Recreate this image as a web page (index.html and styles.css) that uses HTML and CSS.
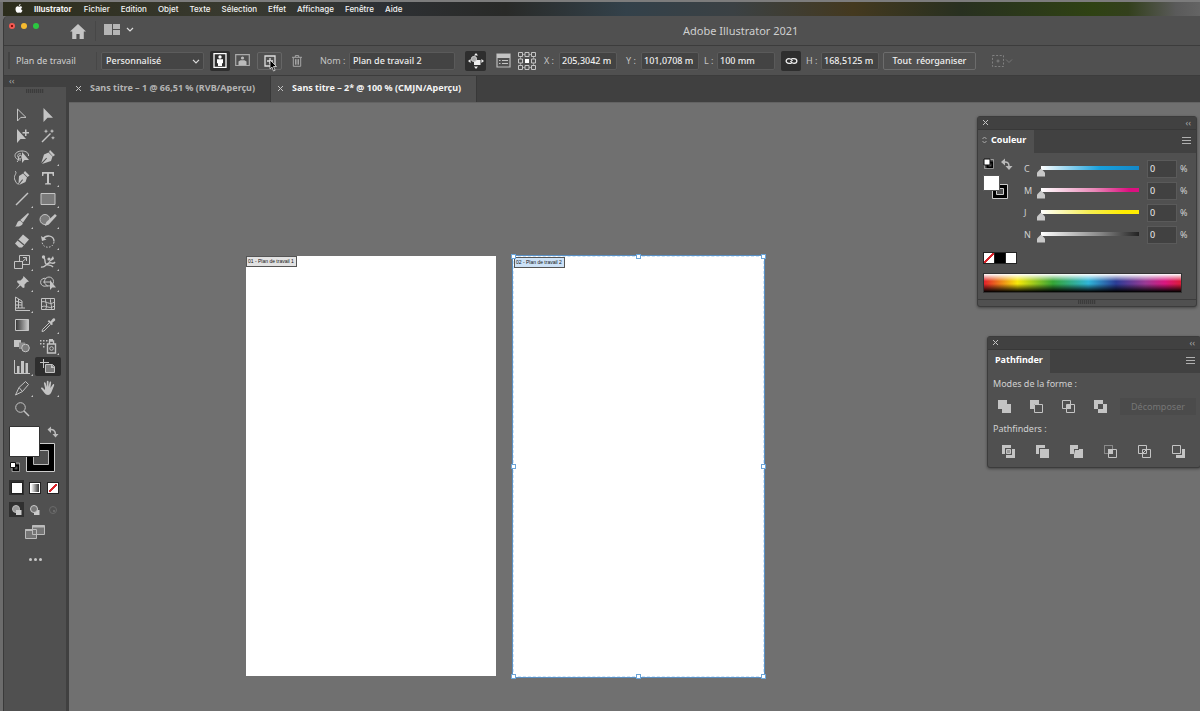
FILE: index.html
```html
<!DOCTYPE html>
<html lang="fr">
<head>
<meta charset="utf-8">
<title>Adobe Illustrator 2021</title>
<link rel="stylesheet" href="styles.css">
</head>
<body>
<nav class="menubar">
  <svg class="apple" viewBox="0 0 16 18"><path d="M11 4.600c1.500 0 2.700.8 3.400 1.900-2.900 1.700-2.400 5.600.6 6.700-.8 2.200-2.200 4.300-3.700 4.300-1.200 0-1.600-.7-3-.7s-1.900.7-3 .7C3.400 17.500 1 13.600 1 10.300 1 6.800 3.200 4.700 5.400 4.700c1.300 0 2.200.8 3 .8S10 4.600 11 4.600zM11 0c.2 2-1.400 4-3.200 4C7.500 2.200 9.200.2 11 0z"/></svg>
  <a class="app" href="#">Illustrator</a><a href="#">Fichier</a><a href="#">Edition</a><a href="#">Objet</a><a href="#">Texte</a><a href="#">Sélection</a><a href="#">Effet</a><a href="#">Affichage</a><a href="#">Fenêtre</a><a href="#">Aide</a>
</nav>
<div class="window">
  <header class="titlebar">
    <div class="lights"><i class="red"></i><i class="amber"></i><i class="green"></i></div>
    <button class="home" aria-label="Accueil"><svg width="16" height="15" viewBox="0 0 16 15"><path fill="#c4c4c4" d="M8 0 0 7.500h2.200V15h4.200v-5h3.200v5h4.200V7.500H16z"/></svg></button>
    <button class="workspace" aria-label="Espace de travail"><svg width="31" height="11" viewBox="0 0 31 11"><path fill="#b5b5b5" d="M0 0h8v11H0zM9 0h7v5H9zM9 6h7v5H9z"/><path d="m23 4 3 3 3-3" fill="none" stroke="#ddd" stroke-width="1.200"/></svg></button>
    <h1>Adobe Illustrator 2021</h1>
  </header>

  <div class="controls">
    <span class="grip"></span>
    <span class="name">Plan de travail</span>
    <span class="preset"><select aria-label="Format prédéfini"><option>Personnalisé</option></select><svg width="8" height="5" viewBox="0 0 8 5"><path d="m1 .8 3 3 3-3" fill="none" stroke="#ddd" stroke-width="1.200"/></svg></span>
    <button class="sq dark" aria-label="Portrait"><svg width="14" height="15" viewBox="0 0 14 15"><path d="M1 .7h12v13.600H1z" fill="none" stroke="#fff" stroke-width="1.300"/><circle cx="7" cy="4" r="1.700" fill="#fff"/><path fill="#fff" d="M4 6.300h6v4H9V13H5v-2.700H4z"/></svg></button>
    <button class="sq wide" aria-label="Paysage"><svg width="15" height="13" viewBox="0 0 15 13"><path d="M.7.700h13.600v10.800H.7z" fill="none" stroke="#aaa" stroke-width="1.200"/><circle cx="7.500" cy="4" r="1.600" fill="#bbb"/><path fill="#bbb" d="M3.500 11V7.500l2-1.200h4l2 1.200V11z"/></svg></button>
    <button class="sq new" aria-label="Nouveau plan de travail"><svg width="12" height="12" viewBox="0 0 12 12"><path d="M1 1h10v10H1zM6 3v6M3 6h6" fill="none" stroke="#ddd" stroke-width="1.300"/></svg><svg class="cursor" width="9" height="13" viewBox="0 0 9 13"><path d="M1 1v9l2-2 1.500 4 1.600-.7L4.500 7.500h3z" fill="#000" stroke="#ddd" stroke-width=".8"/></svg></button>
    <button class="sq trash" aria-label="Supprimer"><svg width="10" height="12" viewBox="0 0 10 12"><path d="M0 2.300h10M3.300 2V.6h3.400V2M1.300 2.500v8.800h7.400V2.500M3.500 4.200v5.500M5 4.200v5.500M6.500 4.200v5.500" fill="none" stroke="#a5a5a5"/></svg></button>
    <label class="l-nom" for="nom">Nom :</label><input id="nom" class="f-nom" value="Plan de travail 2">
    <button class="sq dark move" aria-label="Déplacer avec le plan de travail"><svg width="16" height="16" viewBox="0 0 16 16"><path fill="#eee" d="m8 0 2 2.600H6zM8 16l2-2.600H6zM0 8l2.600-2v4zM16 8l-2.600-2v4zM7 7h5.500v5H6V9z"/><circle cx="6" cy="6" r="2.700" fill="#aaa" stroke="#ddd" stroke-width=".7"/></svg></button>
    <button class="sq list" aria-label="Options"><svg width="15" height="15" viewBox="0 0 15 15"><path d="M1 1h13v13H1z" fill="none" stroke="#bbb" stroke-width="1.200"/><path fill="#c4c4c4" d="M1 1h13v4H1z"/><path d="M3 7.500h1.500M6 7.500h6M3 10.500h1.500M6 10.500h6" stroke="#c4c4c4"/></svg></button>
    <button class="sq ref" aria-label="Point de référence"><svg width="18" height="18" viewBox="0 0 18 18"><path d="M2.500 2.500h13v13h-13z" fill="none" stroke="#aaa" stroke-width=".8"/><g fill="#505050" stroke="#c4c4c4"><path d="M.5.500h4v4h-4zM7 .5h4v4H7zM13.500.500h4v4h-4zM.5 7h4v4h-4zM13.500 7h4v4h-4zM.5 13.500h4v4h-4zM7 13.500h4v4H7zM13.500 13.500h4v4h-4z"/></g><path d="M7 7h4v4H7z" fill="#fff"/></svg></button>
    <label class="l-x" for="px">X :</label><input id="px" class="f-num" value="205,3042 mm">
    <label class="l-y" for="py">Y :</label><input id="py" class="f-num" value="101,0708 mm">
    <label class="l-l" for="pl">L :</label><input id="pl" class="f-num" value="100 mm">
    <button class="sq dark link" aria-label="Conserver les proportions"><svg width="13" height="8" viewBox="0 0 13 8"><path d="M6.500 6.300H4C.2 6.300.2 1.700 4 1.700c2 0 2.700.7 3.500 2.300M6.500 1.700H9c3.800 0 3.800 4.600 0 4.600-2 0-2.700-.7-3.500-2.300" fill="none" stroke="#eee" stroke-width="1.300"/></svg></button>
    <label class="l-h" for="ph">H :</label><input id="ph" class="f-num" value="168,5125 mm">
    <button class="arrange">Tout &nbsp;réorganiser</button>
    <button class="sq snap" aria-label="Aligner" disabled><svg width="22" height="14" viewBox="0 0 22 14"><path d="M1.500 1.500h11v11h-11z" fill="none" stroke="#808080" stroke-dasharray="2 1.600"/><path d="M7 5.500v3M5.500 7h3" stroke="#808080"/><path d="m15 5.500 3 3 3-3" fill="none" stroke="#767676"/></svg></button>
  </div>

  <div class="work">
    <aside class="tools">
      <div class="strip">‹‹</div>
      <div class="hatch"></div>
      <div class="grid">
        <button aria-label="Sélection directe"><svg viewBox="0 0 16 16"><path d="M3.500 2v12l3.300-3.600H12z" class="o"/></svg></button>
        <button aria-label="Sélection"><svg viewBox="0 0 16 16"><path d="M3.500 1v14l4-4.300H13z"/></svg></button>
        <button aria-label="Sélection progressive"><svg viewBox="0 0 16 16"><path d="M3 1v14l3.500-4H12zM11 1.500h1.500V4H15v1.500h-2.500V8H11V5.500H8.500V4H11z"/></svg></button>
        <button aria-label="Baguette magique"><svg viewBox="0 0 16 16"><path d="m2 14 8.500-8.500" class="o m"/><path d="m6 1 .7 1.700L8.500 3l-1.800.8L6 5.500l-.7-1.700L3.500 3l1.800-.3zM12 1l.7 1.500 1.500.5-1.500.7L12 5.200l-.7-1.500L9.800 3l1.500-.5zM13 8l.6 1.300 1.400.4-1.400.7-.6 1.300-.6-1.300-1.400-.7 1.400-.4z"/></svg></button>
        <button aria-label="Lasso"><svg viewBox="0 0 16 16"><path d="M7 11c-4 0-6-2-6-4.500C1 4 4 2 8 2s7 2 6.500 5M7 5C4.500 4 3 6 4 8s4 2 4 0-2-2-3-1 0 5-2 6" class="o"/><path d="M8 3v11l2.600-3H15z"/></svg></button>
        <button class="more" aria-label="Plume"><svg viewBox="0 0 16 16"><path d="m10 1 5 5-2 1.500L9 3zM8.500 3.500l4 4L11 12l-9 3 5-5.500-.7-.7L1.300 14 4 5.500z"/></svg></button>
        <button aria-label="Courbure"><svg viewBox="0 0 16 16"><path d="m11 1 4.500 4.500-2 1.500-4-4zM9 3.500l4 4-1.500 4.500L5 15l4-5-.7-.7L4.500 14 5 6z"/><path d="M1 1c3 2-2 5-.5 8S2 14 5 14" class="o"/></svg></button>
        <button class="more" aria-label="Texte"><svg viewBox="0 0 16 16"><path d="M2 2h12v4h-1.200l-.5-2.300H9V13l2 .4V14.500H5v-1.100l2-.4V3.700H3.700L3.200 6H2z"/></svg></button>
        <button class="more" aria-label="Segment"><svg viewBox="0 0 16 16"><path d="M2 14 14 2" class="o m"/></svg></button>
        <button class="more" aria-label="Rectangle"><svg viewBox="0 0 16 16"><path d="M1 2.500h14v11H1z" class="o g"/></svg></button>
        <button class="more" aria-label="Pinceau"><svg viewBox="0 0 16 16"><path d="m14 1 1 1-6 8.500L6.300 8zM6 8.500l2.800 2.500C8.500 14 4 15 1 14.500c2-.5 1.500-5.500 5-6z"/></svg></button>
        <button class="more" aria-label="Shaper"><svg class="big" viewBox="0 0 18 16"><circle cx="6" cy="7.500" r="5" class="o g"/><path d="m16 2 1.800 1.800-8 8.700-4 1.500L7.300 10z"/></svg></button>
        <button class="more" aria-label="Gomme"><svg viewBox="0 0 16 16"><path d="m9 1.500 6 5-7 8H5l-4-4z"/><path d="m4 7 6 5" stroke="#505050" stroke-width="1.200"/></svg></button>
        <button class="more" aria-label="Rotation"><svg viewBox="0 0 16 16"><path d="M3 6C6 1.500 14 2 14 8.500" class="o m"/><path d="M14 9c-1 7-11 7-12 0" class="o" stroke-dasharray="1.500 1.500"/><path d="m1 3 1 5 4.500-1.500z"/></svg></button>
        <button class="more" aria-label="Mise à l'échelle"><svg viewBox="0 0 16 16"><path d="M.5 7.500h8v7h-8zM5.500 7.500v-6h10v9h-7M8 8l4.500-4M9 3.500h3.500V7" class="o"/></svg></button>
        <button class="more" aria-label="Largeur"><svg viewBox="0 0 16 16"><path d="M1 13c4 1 5-3 8-4s4 2 6-1M4 4c2 2 0 4 2 6s5 0 7 3" class="o m"/><circle cx="3.500" cy="3" r="1.700"/><circle cx="9" cy="5" r="1.600"/><path d="m8 9 5-7 1 3z"/></svg></button>
        <button class="more" aria-label="Punaise"><svg viewBox="0 0 16 16"><path d="m9.500 1 5.500 5.500-2 .5-2.500 2.500v3l-1.500.5L6.500 10.500 1.500 14.500l4-5L3 7l.5-1.500h3L9 3z"/></svg></button>
        <button class="more" aria-label="Concepteur de forme"><svg viewBox="0 0 16 16"><circle cx="9" cy="6.500" r="4.500" class="o"/><path d="M6 3.500a4 4 0 1 0 0 7.500h2M3 7h7" class="o"/><path d="M10 5v10l2.300-2.500H16z"/></svg></button>
        <button class="more" aria-label="Grille de perspective"><svg viewBox="0 0 16 16"><path d="M1.500 1v13.500H16M1.500 1 8 5v7M1.500 5l6.500 2M1.500 9H8M4.500 3v9M1.500 12H11" class="o"/></svg></button>
        <button aria-label="Filet"><svg viewBox="0 0 16 16"><path d="M1.500 2.500h13v11h-13zM1.500 6c4-2 8 4 13 0M1.500 11c5-3 7 3 13-1M6 2c-2 4 3 7-1 12M11 2c-2 4 2 8 0 12" class="o"/></svg></button>
        <button aria-label="Dégradé"><svg viewBox="0 0 16 16"><defs><linearGradient id="gr"><stop stop-color="#333"/><stop offset="1" stop-color="#ccc"/></linearGradient></defs><path d="M1.500 2.500h13v11h-13z" fill="url(#gr)" stroke="#c4c4c4"/></svg></button>
        <button class="more" aria-label="Pipette"><svg viewBox="0 0 16 16"><path d="M10.500 4.500 12.500 2c1.500-2 4 .5 2 2L12 6l1 1-1.300 1.300-4-4L9 3z"/><path d="m9 6-6.500 6.500-.5 2 2-.5L10.500 7.500" class="o"/></svg></button>
        <button aria-label="Dégradé de formes"><svg viewBox="0 0 16 16"><path d="M0 2h7v7H0z"/><path d="M5 4.500h6V11H5z" fill="#8c8c8c"/><circle cx="11.500" cy="10" r="3.800" class="o g"/></svg></button>
        <button class="more" aria-label="Pulvérisation"><svg class="big" viewBox="0 0 18 16"><path d="M8.500 6h8v9h-8zM10.500 5.500V3h4v2.500" class="o m"/><circle cx="12.500" cy="10.500" r="1.800" class="o"/><path d="M1 2h1.500v1.500H1zM4 2h1.500v1.500H4zM7 2h1.500v1.500H7zM1 5h1.500v1.500H1zM4 5h1.500v1.500H4zM4 8h1.500v1.500H4zM10 1h4v2h-4z"/></svg></button>
        <button class="more" aria-label="Graphe"><svg viewBox="0 0 16 16"><path d="M.5 1v13.500H16" class="o"/><path d="M3 7h2.500v7H3zM7 2h3v12H7zM11.500 4h2.500v10h-2.500z"/></svg></button>
        <button class="on" aria-label="Plan de travail"><svg viewBox="0 0 16 16"><path d="M3.500 0v9M0 3.500h9" class="o"/><path d="M5.500 5.500h7l2 2v6h-9z" class="o g"/><path d="M11 5.500v3.500h3.500z"/></svg></button>
        <button class="more" aria-label="Tranche"><svg viewBox="0 0 16 16"><path d="M11.500 1.500 14.500 4.500 8.500 11.500 1.500 15 5 7.500zM5 7.500l3.500 4" class="o"/></svg></button>
        <button class="more" aria-label="Main"><svg viewBox="0 0 16 16"><path d="M5 8 4 3.500c-.3-1.500 1.200-1.800 1.600-.5L6.800 7V1.800c0-1.400 1.700-1.400 1.700 0V7l1-4.600c.3-1.300 1.900-1 1.600.4L10.400 8l2.200-3.300c.8-1.200 2-.4 1.500.8l-2.600 6.600C10.700 14 9.500 15 8 15c-1.600 0-2.500-.8-3.500-2L1.200 8.800c-.7-1.100.5-1.900 1.500-1L5 10z"/></svg></button>
        <button aria-label="Zoom"><svg viewBox="0 0 16 16"><circle cx="6.500" cy="6.500" r="4.800" class="o"/><path d="m10 10 5 5" class="o m"/></svg></button>
      </div>
      <svg class="fillstroke" width="50" height="47" viewBox="0 0 50 47"><path d="M17.500 17.500h28v28h-28z" fill="#000" stroke="#ccc"/><path d="M24.500 24.500h15v14h-15z" fill="#505050" stroke="#bbb"/><path d="M.5.500h30v30H.5z" fill="#fff" stroke="#333"/><path d="M41 3.500c3-.5 5.500 1 5.500 5" fill="none" stroke="#bbb" stroke-width="1.500"/><path fill="#bbb" d="m38.500 3.500 3.500-3v6.500zM46.500 11.500 43.500 8h6z"/><path d="M4.500 39.500h5v5h-5z" fill="none" stroke="#000" stroke-width="2"/><path d="M1.500 36.500h5v5h-5z" fill="#fff" stroke="#111"/><path d="M7 37h3.500v8.500H3V42" fill="none" stroke="#bbb" stroke-width=".7"/></svg>
      <div class="modes">
        <button class="on" aria-label="Couleur"><i class="white"></i></button><button aria-label="Dégradé"><i class="ramp"></i></button><button aria-label="Sans"><i class="none"></i></button>
      </div>
      <div class="modes draw">
        <button class="on" aria-label="Dessin normal"><svg viewBox="0 0 12 12"><circle cx="5" cy="5" r="3.500" fill="#999" stroke="#bbb"/><path fill="#ccc" d="M5 6h5.500v5H5z"/></svg></button><button aria-label="Dessin arrière"><svg viewBox="0 0 12 12"><path fill="#ccc" d="M5 6h5.500v5H5z"/><circle cx="5" cy="5" r="3.500" fill="#777" stroke="#ccc"/></svg></button><button aria-label="Dessin intérieur"><svg viewBox="0 0 12 12"><circle cx="6" cy="6" r="3.500" fill="none" stroke="#6a6a6a"/><path fill="#6a6a6a" d="M6 6h2v2H6z"/></svg></button>
      </div>
      <button class="screen" aria-label="Mode d'écran"><svg width="20" height="14" viewBox="0 0 20 14"><path d="M.5 4.500h11v9H.5zM7.500.500h12v9h-12z" fill="#757575" stroke="#bbb"/><path d="M.5 5h7M7.500 1.500h12" stroke="#bbb" stroke-width="2"/></svg></button>
      <button class="dots" aria-label="Modifier la barre d'outils"><i></i><i></i><i></i></button>
    </aside>

    <main class="docs">
      <div class="tabs">
        <div class="tab"><button class="x" aria-label="Fermer"><svg viewBox="0 0 7 7"><path d="m1 1 5 5M6 1 1 6"/></svg></button><span>Sans titre – 1 @ 66,51 % (RVB/Aperçu)</span></div>
        <div class="tab on"><button class="x" aria-label="Fermer"><svg viewBox="0 0 7 7"><path d="m1 1 5 5M6 1 1 6"/></svg></button><span>Sans titre – 2* @ 100 % (CMJN/Aperçu)</span></div>
      </div>
      <div class="canvas">
        <section class="board one"><span class="tag">01 - Plan de travail 1</span></section>
        <section class="board two"><span class="tag">02 - Plan de travail 2</span>
          <i class="h nw"></i><i class="h n"></i><i class="h ne"></i><i class="h w"></i><i class="h e"></i><i class="h sw"></i><i class="h s"></i><i class="h se"></i>
        </section>

        <section class="panel color">
          <div class="phead"><button class="x" aria-label="Fermer"><svg viewBox="0 0 7 7"><path d="m1 1 5 5M6 1 1 6"/></svg></button><span>‹‹</span></div>
          <div class="ptabs"><h2><svg width="5" height="8" viewBox="0 0 5 8"><path d="m.5 3 2-2 2 2M.5 5l2 2 2-2" fill="none" stroke="#aaa"/></svg>Couleur</h2><button class="burger" aria-label="Menu"><i></i><i></i><i></i></button></div>
          <div class="cbody">
            <div class="mix">
              <svg width="32" height="44" viewBox="0 0 32 44"><path d="M4.500 4.500h5v5h-5z" fill="none" stroke="#000" stroke-width="2"/><path d="M1 1h6v6H1z" fill="#fff" stroke="#111"/><path d="M7.500 1.500h3v9h-9v-3" fill="none" stroke="#bbb" stroke-width=".7"/><path d="M21 4c3-.5 5 1 5 4" fill="none" stroke="#bbb" stroke-width="1.500"/><path fill="#bbb" d="m18 4 4-3.500v7zM26 12l-3.500-4h7z"/><path d="M9.500 26.500h15v14h-15z" fill="#000" stroke="#ccc"/><path d="M13.500 30.500h7v6h-7z" fill="#505050" stroke="#ccc"/><path d="M.5 17.500h16v15H.5z" fill="#fff" stroke="#555"/></svg>
              <div class="sliders">
                <label for="c">C</label><input type="range" class="cy" id="c" value="0"><input class="val" value="0" aria-label="C %"><span>%</span>
                <label for="m">M</label><input type="range" class="ma" id="m" value="0"><input class="val" value="0" aria-label="M %"><span>%</span>
                <label for="j">J</label><input type="range" class="ye" id="j" value="0"><input class="val" value="0" aria-label="J %"><span>%</span>
                <label for="n">N</label><input type="range" class="bk" id="n" value="0"><input class="val" value="0" aria-label="N %"><span>%</span>
              </div>
            </div>
            <div class="chips"><i class="none"></i><i class="black"></i><i class="white"></i></div>
            <div class="spectrum"></div>
          </div>
          <div class="pfoot"><div class="hatch"></div></div>
        </section>

        <section class="panel path">
          <div class="phead"><button class="x" aria-label="Fermer"><svg viewBox="0 0 7 7"><path d="m1 1 5 5M6 1 1 6"/></svg></button><span>‹‹</span></div>
          <div class="ptabs"><h2>Pathfinder</h2><button class="burger" aria-label="Menu"><i></i><i></i><i></i></button></div>
          <div class="pbody">
            <p>Modes de la forme :</p>
            <div class="row shape">
              <button aria-label="Réunion"><svg viewBox="0 0 13 13"><path d="M0 0h9v4h4v9H4V9H0z"/></svg></button>
              <button aria-label="Soustraction"><svg viewBox="0 0 13 13"><path d="M0 0h9v4H4v5H0z"/><path d="M4.500 4.500h8v8h-8z" class="o"/></svg></button>
              <button aria-label="Intersection"><svg viewBox="0 0 13 13"><path d="M.5.500h8v8h-8zM4.500 4.500h8v8h-8z" class="o"/><path d="M5 5h4v4H5z"/></svg></button>
              <button aria-label="Exclusion"><svg viewBox="0 0 13 13"><path fill-rule="evenodd" d="M0 0h9v4h4v9H4V9H0zM4 4v5h5V4z"/></svg></button>
              <button class="expand" disabled>Décomposer</button>
            </div>
            <p>Pathfinders :</p>
            <div class="row finders">
              <button aria-label="Division"><svg viewBox="0 0 13 13"><path d="M0 0h9v3H3v6H0zM10 4h3v9H4v-3h6z"/><path d="M4.500 4.500h4v4h-4z" fill="#999" stroke="#c4c4c4"/></svg></button>
              <button aria-label="Fond"><svg viewBox="0 0 13 13"><path d="M0 0h9v3H3v6H0zM4 4h9v9H4z"/></svg></button>
              <button aria-label="Fusion"><svg viewBox="0 0 13 13"><path d="M0 0h8v4H4v5H0zM9 0v4h4v9H4V9.500L5 5h4z"/></svg></button>
              <button aria-label="Rogner"><svg viewBox="0 0 13 13"><path d="M.5.500h8v8h-8z" class="o" stroke-dasharray="1 1"/><path d="M9 4.500h3.500v8h-8V9" class="o"/><path d="M4 4h5v5H4z"/></svg></button>
              <button aria-label="Contour"><svg viewBox="0 0 13 13"><path d="M.5.500h8v8h-8zM4.500 4.500h8v8h-8z" class="o"/><path d="m5 8 3-3" class="o"/></svg></button>
              <button aria-label="Arrière moins avant"><svg viewBox="0 0 13 13"><path d="M.5.500h8v8h-8z" class="o"/><path d="M10 4h3v9H4v-3h6z"/></svg></button>
            </div>
          </div>
        </section>
      </div>
    </main>
  </div>
</div>
</body>
</html>
```
FILE: styles.css
```css
* { box-sizing: border-box; }
body {
  margin: 0;
  height: 100vh;
  display: flex;
  flex-direction: column;
  overflow: hidden;
  background: #6c6c6c;
  color: #d0d0d0;
  font: 9px/12px "Noto Sans", "Open Sans", sans-serif;
  border-top: 2px solid #7c7c7c;
  padding-left: 3px;
}
button, input, select { font: inherit; color: inherit; margin: 0; padding: 0; border: 0; background: none; }
button { display: flex; align-items: center; justify-content: center; flex: none; }
h1, h2, p { margin: 0; font: inherit; }
svg { flex: none; display: block; }

.menubar {
  flex: none;
  height: 14px;
  display: flex;
  align-items: center;
  gap: 11px;
  padding: 0 0 1px 12px;
  background: linear-gradient(90deg, #2c2d1c, #393a30 20%, #2e3135 31%, #292a28 42%, #33414a 52%, #3b4144 61%, #44391f 71%, #283020 80%, #2f4213 91%, #33401c 94%, #5a5a5a 98%, #646464);
  font: 500 8px/12px Inter, sans-serif;
}
.menubar a { color: #f2f2f2; text-decoration: none; }
.menubar .app { font-weight: 700; margin-right: 1px; }
.apple { width: 8px; height: 9px; fill: #fff; }

.window { flex: 1; min-height: 0; display: flex; flex-direction: column; border-left: 1px solid #3a3a3a; border-radius: 5px 0 0 0; background: #505050; }
.titlebar { flex: none; height: 30px; display: flex; align-items: center; border-bottom: 1px solid #3c3c3c; }
.lights { display: flex; gap: 6px; padding: 0 0 10px 5px; }
.lights i { width: 6px; height: 6px; border-radius: 50%; }
.red { background: radial-gradient(#8a0f0c 22%, #f25a52 32%); }
.amber { background: #f6bb2f; }
.green { background: #2bc840; }
.home { margin-left: 31px; padding-top: 1px; height: 18px; }
.workspace { margin-left: 9px; padding: 0 0 3px 8px; height: 20px; border-left: 1px solid #474747; }
h1 { margin-left: 548px; font-size: 11px; line-height: 16px; color: #cfcfcf; }

.controls { flex: none; height: 30px; display: flex; align-items: center; border-bottom: 1px solid #3c3c3c; }
.grip { width: 2px; height: 17px; margin-left: 4px; background: #434343; }
.name { width: 81px; margin-left: 6px; border-right: 1px solid #474747; line-height: 18px; }
.preset { width: 103px; height: 18px; margin-left: 4px; position: relative; }
.preset select { width: 100%; height: 18px; appearance: none; background: #454545; border: 1px solid #5c5c5c; border-radius: 2px; color: #eee; font-weight: 500; padding-left: 4px; }
.preset svg { position: absolute; right: 4px; top: 7px; pointer-events: none; }
.sq { height: 20px; width: 20px; }
.preset + .sq { margin-left: 6px; }
.dark { background: #2e2e2e; border-radius: 2px; }
.wide { margin-left: 2px; width: 21px; }
.new { position: relative; margin-left: 4px; width: 25px; border: 1px solid #666; border-radius: 2px; height: 18px; }
.cursor { position: absolute; left: 11px; top: 6px; }
.trash { margin-left: 5px; }
.controls label { color: #c4c4c4; white-space: nowrap; flex: none; }
.l-nom { width: 29px; margin-left: 13px; }
.l-x { width: 15px; margin-left: 7px; }
.l-y { width: 15px; margin-left: 9px; }
.l-l { width: 13px; margin-left: 5px; }
.l-h { width: 15px; margin-left: 5px; }
.controls input { height: 18px; background: #434343; border: 1px solid #5a5a5a; border-radius: 2px; color: #eee; font-weight: 500; padding: 0 5px 0 2px; }
.controls .f-nom { width: 106px; padding-left: 3px; }
.controls .f-num { width: 58px; }
.move { margin-left: 10px; width: 21px; }
.list { margin-left: 7px; }
.ref { margin-left: 4px; }
.link { margin-left: 6px; }
.arrange { margin-left: 4px; width: 93px; height: 18px; border: 1px solid #6c6c6c; border-radius: 2px; color: #f0f0f0; font-weight: 500; white-space: nowrap; }
.snap { margin-left: 15px; width: 22px; }

.work { flex: 1; min-height: 0; display: flex; background: #404040; }
.tools { width: 62px; flex: none; background: #505050; display: flex; flex-direction: column; align-items: flex-start; }
.strip { width: 100%; height: 11px; background: #404040; padding-left: 5px; color: #aaa; line-height: 9px; }
.hatch { width: 18px; height: 4px; background: repeating-linear-gradient(90deg, #3c3c3c 0 1px, #4a4a4a 1px 2px); }
.tools .hatch { margin: 2px 0 11px 22px; }
.grid { display: grid; grid-template-columns: 26px 26px; grid-auto-rows: 21px; margin-left: 5px; }
.grid button { position: relative; border-radius: 2px; }
.grid svg { width: 16px; height: 16px; }
.grid .big { width: 18px; }
.grid svg, .row svg { fill: #c4c4c4; }
svg .o { fill: none; stroke: #c4c4c4; stroke-width: 1; }
svg .m { stroke-width: 1.4; }
svg .g { fill: #7a7a7a; }
.more::after { content: ""; position: absolute; right: 2px; bottom: 1px; border: 1px solid #c4c4c4; border-top-color: transparent; border-left-color: transparent; }
.grid .on { background: #2e2e2e; margin: 1px 0; }
.fillstroke { margin: 7px 0 0 5px; }
.modes { display: flex; gap: 3px; margin: 7px 0 0 5px; }
.modes button { width: 15px; height: 15px; }
.modes i { width: 10px; height: 10px; border: 1px solid #fff; outline: 1px solid #222; }
.modes .on { background: #303030; }
.white { background: #fff; }
.black { background: #000; }
.ramp { background: linear-gradient(90deg, #fff, #333); }
.none { background: linear-gradient(to bottom right, #fff 42%, #d8232a 43% 57%, #fff 58%); }
.draw svg { width: 12px; height: 12px; }
.screen { margin: 8px 0 0 21px; }
.dots { gap: 2px; margin: 19px 0 0 25px; }
.dots i { width: 3px; height: 3px; border-radius: 50%; background: #c8c8c8; }

.docs { flex: 1; min-width: 0; margin-left: 3px; display: flex; flex-direction: column; }
.tabs { flex: none; height: 26px; display: flex; }
.tab { display: flex; align-items: center; padding: 0 15px 2px 4px; color: #b4b4b4; font-weight: 700; white-space: nowrap; border-right: 1px solid #383838; }
.tab.on { background: #505050; color: #f4f4f4; }
.x { width: 10px; height: 12px; }
.x svg { width: 7px; height: 7px; fill: none; stroke: #c4c4c4; }
.tab .x { margin-right: 7px; }
.canvas { flex: 1; position: relative; overflow: hidden; background: #707070; border-top: 1px solid #636363; }

.board { position: absolute; background: #fff; }
.one { left: 177px; top: 153px; width: 250px; height: 420px; }
.two { left: 444px; top: 153px; width: 251px; height: 421px; border: 1px dashed #cfe4f7; outline: 1px solid #5a90c4; }
.tag { position: absolute; left: 0; top: 0; width: 51px; height: 11px; border: 1px solid #555; background: #e2e2e2; color: #111; font: 5px/9px "Liberation Sans", sans-serif; white-space: nowrap; padding-left: 1px; }
.two .tag { background: #cde2f7; }
.h { position: absolute; width: 5px; height: 5px; background: #fff; border: 1px solid #6aa4d8; }
.nw, .w, .sw { left: -3px; }
.ne, .e, .se { right: -3px; }
.nw, .n, .ne { top: -3px; }
.sw, .s, .se { bottom: -3px; }
.n, .s { left: calc(50% - 3px); }
.w, .e { top: calc(50% - 3px); }

.panel { position: absolute; background: #505050; border: 1px solid #3c3c3c; border-radius: 3px; box-shadow: 0 1px 3px #0006; display: flex; flex-direction: column; }
.color { right: 3px; top: 13px; width: 220px; }
.path { right: -1px; top: 233px; width: 214px; }
.phead { height: 12px; display: flex; align-items: center; justify-content: space-between; padding: 0 5px 1px 2px; background: #414141; color: #aaa; line-height: 10px; }
.ptabs { height: 24px; display: flex; align-items: center; justify-content: space-between; padding: 0 5px 2px 0; background: #414141; border-top: 1px solid #383838; }
.ptabs h2 { height: 23px; display: flex; align-items: center; align-self: flex-start; gap: 4px; padding: 0 8px 4px 4px; background: #505050; color: #fff; font-weight: 700; }
.path h2 { padding: 0 7px 4px; }
.burger { flex-direction: column; gap: 2px; }
.burger i { width: 9px; height: 1px; background: #b0b0b0; }
.cbody { padding: 5px 0 6px 5px; }
.mix { display: flex; height: 94px; align-items: flex-start; }
.sliders { display: grid; grid-template-columns: 13px 106px 37px 9px; grid-auto-rows: 22px; align-items: center; margin-left: 9px; }
.sliders input.val { width: 30px; height: 18px; margin-left: 4px; background: #414141; border: 1px solid #5a5a5a; padding: 0 0 2px 2px; color: #eee; }
input[type="range"] { appearance: none; width: 106px; height: 14px; background-repeat: no-repeat; background-position: 4px 4px; background-size: calc(100% - 8px) 4px; }
input[type="range"]::-webkit-slider-thumb { appearance: none; width: 8px; height: 8px; margin-top: 7px; background: #c8c8c8; clip-path: polygon(50% 0, 100% 50%, 100% 100%, 0 100%, 0 50%); }
.cy { background-image: linear-gradient(90deg, #fff, #18a0dc 60%, #1488c8); }
.ma { background-image: linear-gradient(90deg, #fff, #e987b7 55%, #dc1080 90%); }
.ye { background-image: linear-gradient(90deg, #fff, #f6ee50 50%, #ffec00 85%); }
.bk { background-image: linear-gradient(90deg, #fff, #888 60%, #222); }
.chips { display: flex; }
.chips i { width: 12px; height: 12px; border: 1px solid #222; margin-right: -1px; }
.spectrum { width: 199px; height: 20px; margin-top: 9px; border: 1px solid #333; background: linear-gradient(#fff, #fff0 40%, #0000 55%, #000), linear-gradient(90deg, #e3202a, #f6e80a 17%, #35a536 35%, #30b5d8 53%, #2b3c95 67%, #9b3a94 82%, #d9167e 92%, #dc1c38); }
.pfoot { height: 7px; border-top: 1px solid #3c3c3c; display: flex; justify-content: center; }
.pbody { padding: 4px 4px 1px 5px; }
.pbody p { line-height: 14px; }
.row { display: flex; align-items: center; }
.row button { width: 13px; height: 13px; }
.row svg { width: 13px; height: 13px; }
.shape { gap: 19px; padding: 0 0 0 5px; height: 31px; }
.row .expand { width: 76px; height: 17px; margin-left: -6px; background: #4b4b4b; color: #767676; }
.finders { gap: 21px; padding-left: 9px; height: 30px; }
```
